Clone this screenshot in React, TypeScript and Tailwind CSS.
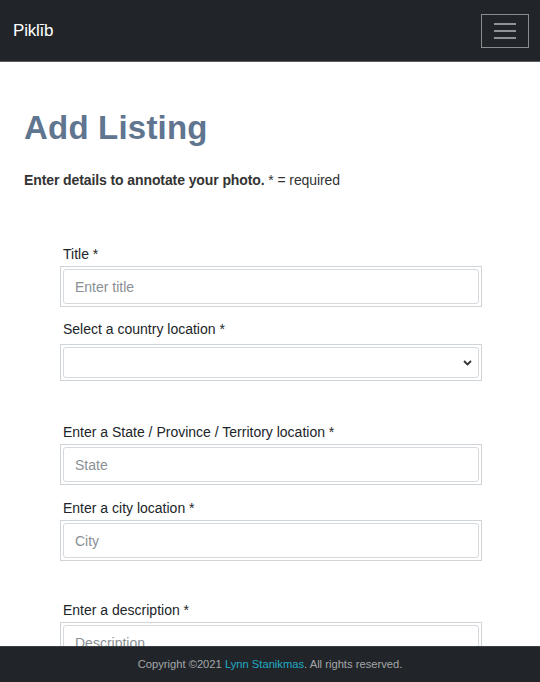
import React from "react";

function Field({ label, placeholder, className = "" }: { label: string; placeholder: string; className?: string }) {
  return (
    <div className={className}>
      <label className="block pl-[3px] text-[14px] leading-[16px] text-[#212529]">{label}</label>
      <div className="mt-[4px] border border-[#cfd4d9] p-[2px]">
        <input
          className="block w-full h-[35px] rounded-[3px] border border-[#d6dadf] bg-white px-[11px] text-[14px] text-[#495057] placeholder:text-[#8a8f94] outline-none"
          placeholder={placeholder}
        />
      </div>
    </div>
  );
}

export default function App() {
  return (
    <div className="h-screen flex flex-col bg-white font-['Liberation_Sans',Arial,sans-serif] overflow-hidden">
      <nav className="h-[62px] shrink-0 bg-[#212529] border-b border-[#5a5e62] flex items-center justify-between pl-[13px] pr-[11px]">
        <span className="text-white text-[17px] leading-none tracking-[-0.2px]">Piklīb</span>
        <button className="w-[48px] h-[34px] border border-[#8a8d90] flex flex-col items-center justify-center gap-[5px]">
          <span className="block w-[22px] h-[2px] bg-[#8f9296]" />
          <span className="block w-[22px] h-[2px] bg-[#8f9296]" />
          <span className="block w-[22px] h-[2px] bg-[#8f9296]" />
        </button>
      </nav>

      <main className="flex-1 overflow-hidden px-[24px]">
        <h1 className="mt-[46px] text-[33px] leading-[40px] font-bold text-[#5f7590] tracking-[0.2px]">Add Listing</h1>
        <p className="mt-[24px] text-[14px] leading-[16px] text-[#333] tracking-[-0.1px]">
          <span className="font-bold">Enter details to annotate your photo.</span> * = required
        </p>

        <form className="mt-[58px] pl-[36px] pr-[34px]">
          <Field label="Title *" placeholder="Enter title" />

          <div className="mt-[14px]">
            <label className="block pl-[3px] text-[14px] leading-[16px] text-[#212529]">Select a country location *</label>
            <div className="mt-[7px] border border-[#cfd4d9] p-[2px]">
              <div className="relative">
                <select className="block w-full h-[31px] appearance-none rounded-[3px] border border-[#d6dadf] bg-white px-[10px] text-[14px] outline-none">
                  <option></option>
                </select>
                <svg className="absolute right-[7px] top-[13px] pointer-events-none" width="9" height="6" viewBox="0 0 9 6">
                  <path d="M1 1l3.5 3.5L8 1" fill="none" stroke="#333" strokeWidth="1.8" />
                </svg>
              </div>
            </div>
          </div>

          <Field className="mt-[43px]" label="Enter a State / Province / Territory location *" placeholder="State" />
          <Field className="mt-[15px]" label="Enter a city location *" placeholder="City" />
          <Field className="mt-[41px]" label="Enter a description *" placeholder="Description" />
        </form>
      </main>

      <footer className="h-[36px] shrink-0 bg-[#212529] border-t border-[#3a3e42] flex items-center justify-center text-[11.2px] text-[#a4a7aa]">
        <span>
          Copyright ©2021 <span className="text-[#22abc6]">Lynn Stanikmas</span>. All rights reserved.
        </span>
      </footer>
    </div>
  );
}
